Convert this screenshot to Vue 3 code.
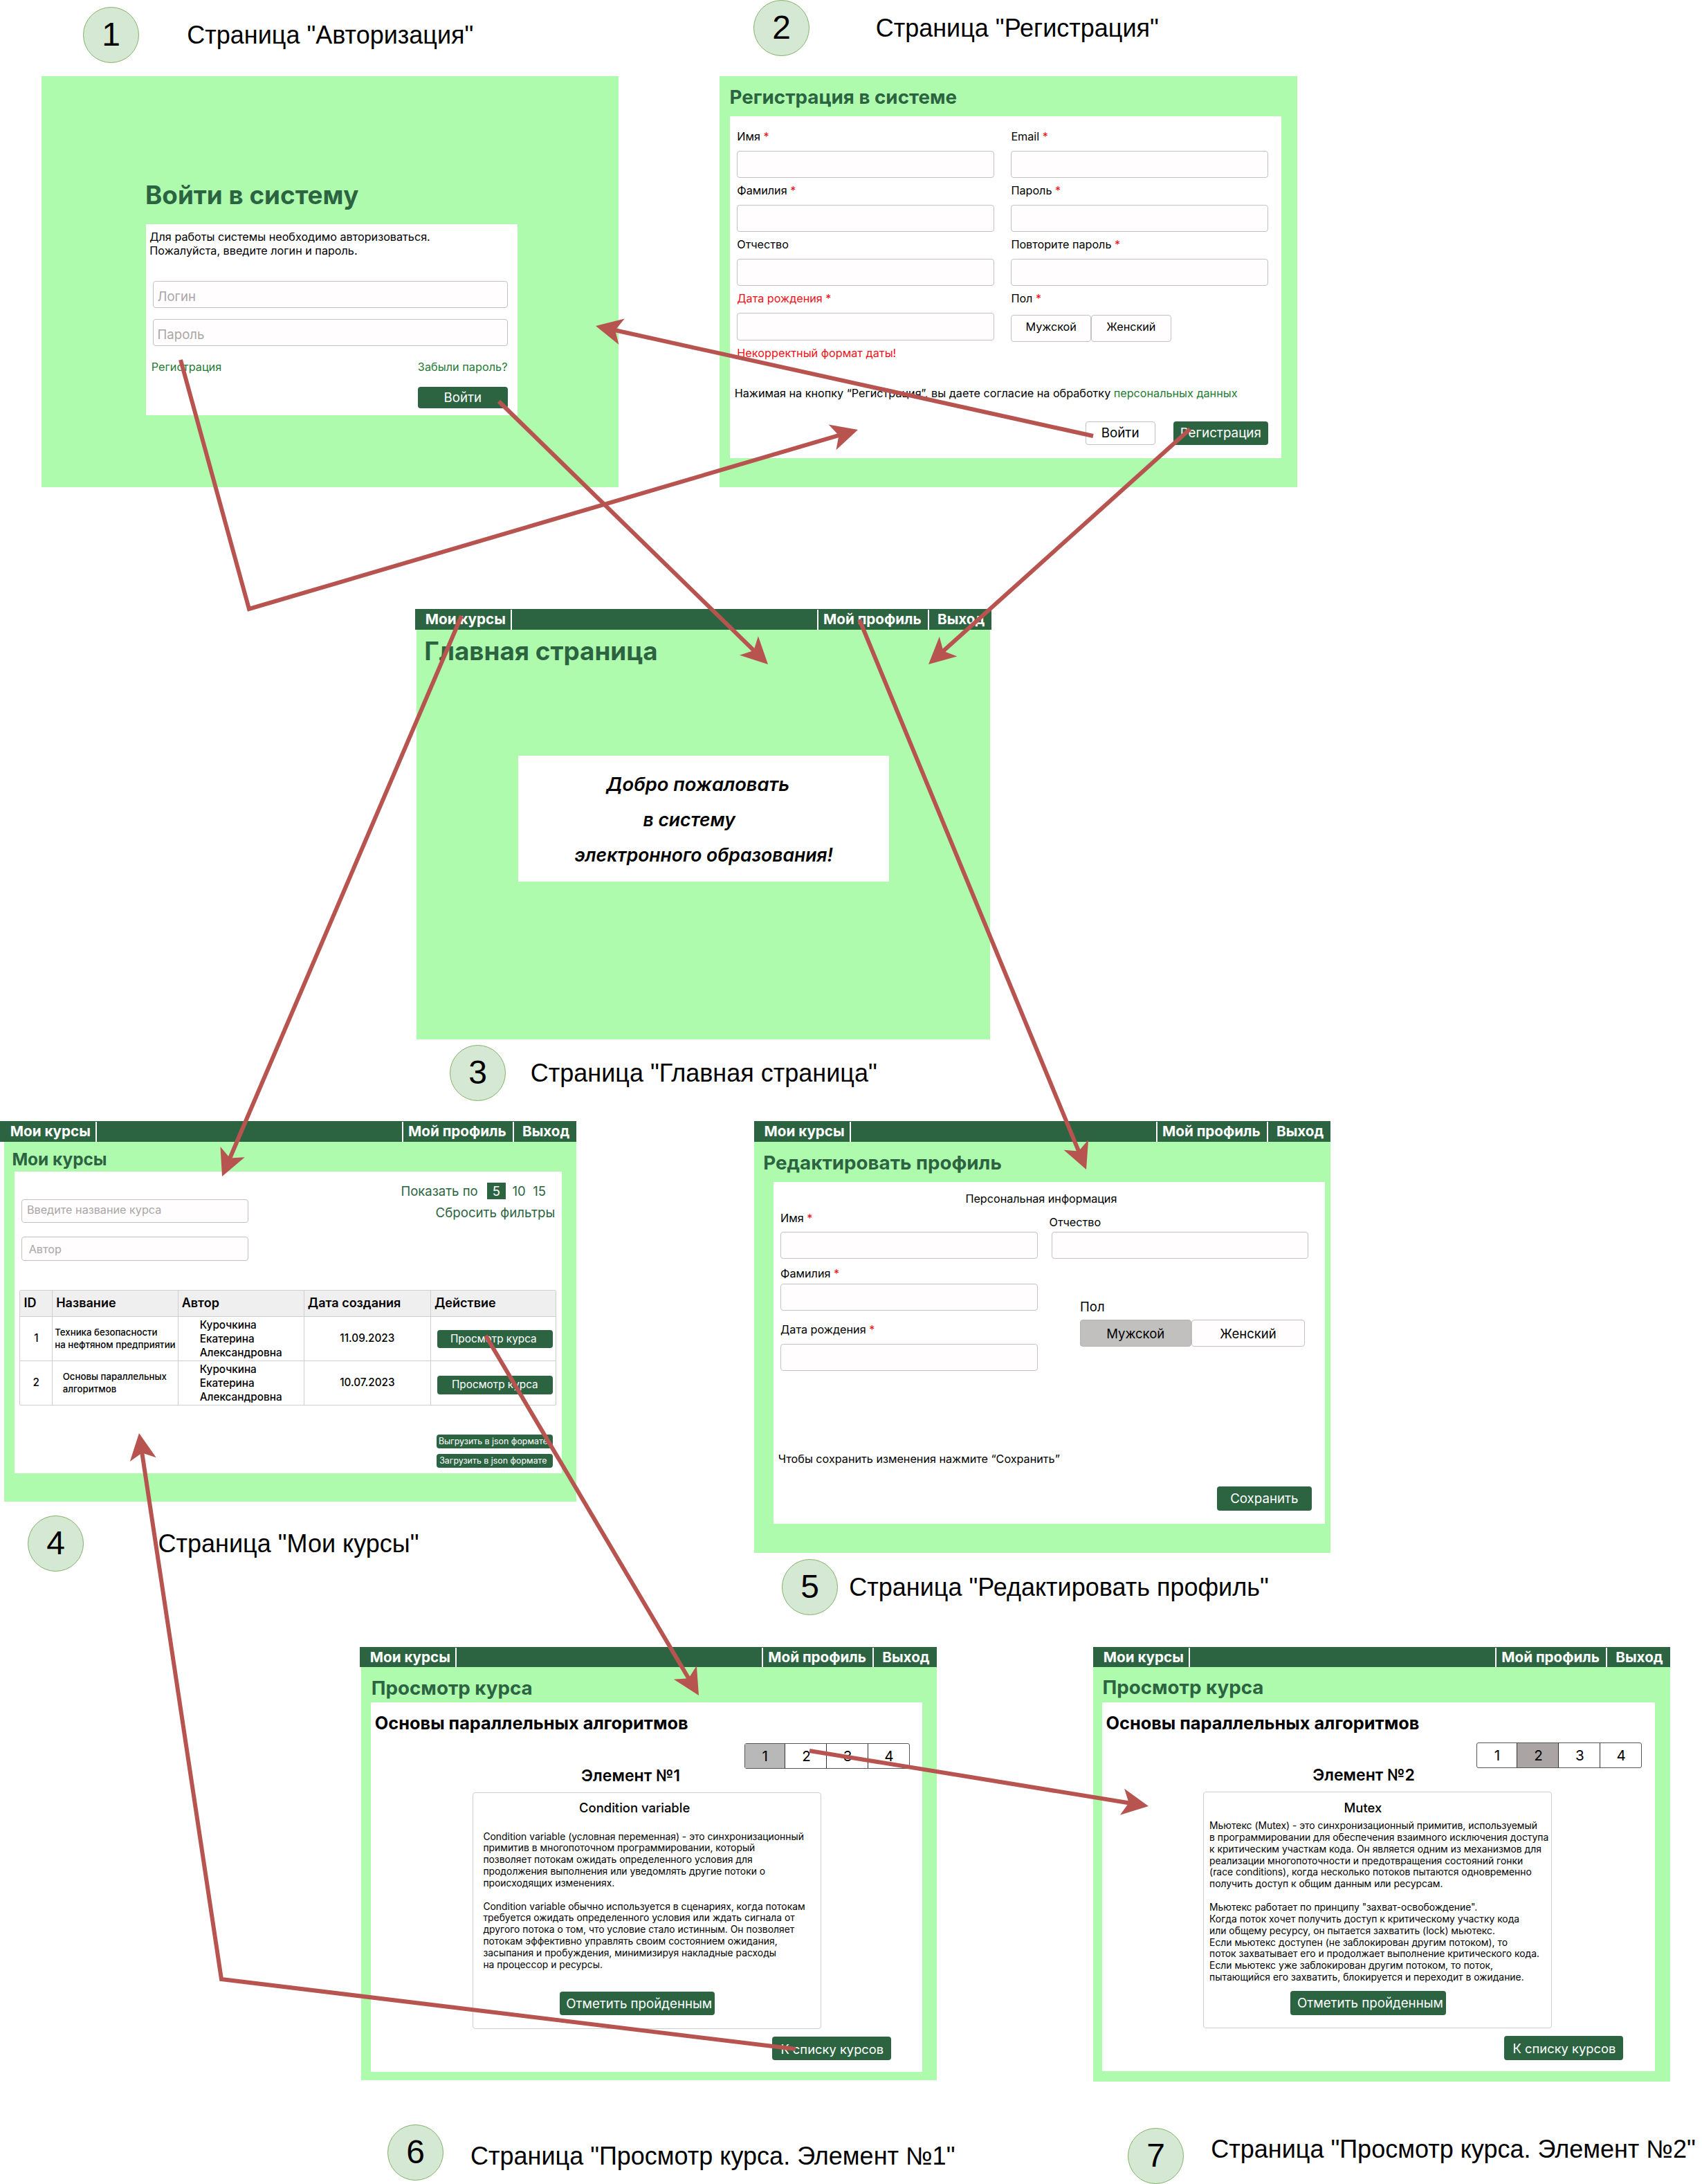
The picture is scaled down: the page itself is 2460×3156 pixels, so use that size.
<script setup>
import { h } from 'vue'

const NavBar = () =>
  h('nav', { class: 'nav' }, [
    h('a', { class: 'nav-courses' }, 'Мои курсы'),
    h('span', { class: 'nav-space' }),
    h('a', { class: 'nav-profile' }, 'Мой профиль'),
    h('a', { class: 'nav-exit' }, 'Выход'),
  ])

const captions = [
  { n: 1, cx: 120, cy: 10, x: 270.3, y: 30, text: 'Страница "Авторизация"' },
  { n: 2, cx: 1089, cy: 0, x: 1265.7, y: 20, text: 'Страница "Регистрация"' },
  { n: 3, cx: 650, cy: 1510, x: 766.8, y: 1530, text: 'Страница "Главная страница"' },
  { n: 4, cx: 40, cy: 2190, x: 228.6, y: 2210, text: 'Страница "Мои курсы"' },
  { n: 5, cx: 1130, cy: 2253, x: 1227.3, y: 2273, text: 'Страница "Редактировать профиль"' },
  { n: 6, cx: 560, cy: 3070, x: 680, y: 3095, text: 'Страница "Просмотр курса. Элемент №1"' },
  { n: 7, cx: 1630, cy: 3075, x: 1750.3, y: 3085, text: 'Страница "Просмотр курса. Элемент №2"' },
]

const arrows = [
  [[261, 520], [360, 880], [1240, 621]],
  [[721, 580], [1110, 960]],
  [[1580, 630], [861, 471]],
  [[1720, 620], [1342, 960]],
  [[667, 890], [321, 1700]],
  [[1242, 895], [1570, 1690]],
  [[702, 1930], [1010, 2450]],
  [[1150, 2961], [320, 2860], [201, 2071]],
  [[1170, 2530], [1660, 2610]],
].map((pts) => {
  const [x2, y2] = pts[pts.length - 1]
  const [x1, y1] = pts[pts.length - 2]
  const a = Math.atan2(y2 - y1, x2 - x1)
  const end = [x2 - Math.cos(a) * 28, y2 - Math.sin(a) * 28]
  return {
    line: [...pts.slice(0, -1), end].map((p) => p.join(',')).join(' '),
    head: `translate(${x2} ${y2}) rotate(${(a * 180) / Math.PI})`,
  }
})

const courses = [
  { id: 1, name: ['Техника безопасности', 'на нефтяном предприятии'], date: '11.09.2023' },
  { id: 2, name: ['Основы параллельных', 'алгоритмов'], date: '10.07.2023' },
]
const author = ['Курочкина', 'Екатерина', 'Александровна']

const lessons = [
  {
    n: 1,
    title: 'Condition variable',
    text: `Condition variable (условная переменная) - это синхронизационный
примитив в многопоточном программировании, который
позволяет потокам ожидать определенного условия для
продолжения выполнения или уведомлять другие потоки о
происходящих изменениях.

Condition variable обычно используется в сценариях, когда потокам
требуется ожидать определенного условия или ждать сигнала от
другого потока о том, что условие стало истинным. Он позволяет
потокам эффективно управлять своим состоянием ожидания,
засыпания и пробуждения, минимизируя накладные расходы
на процессор и ресурсы.`,
  },
  {
    n: 2,
    title: 'Mutex',
    text: `Мьютекс (Mutex) - это синхронизационный примитив, используемый
в программировании для обеспечения взаимного исключения доступа
к критическим участкам кода. Он является одним из механизмов для
реализации многопоточности и предотвращения состояний гонки
(race conditions), когда несколько потоков пытаются одновременно
получить доступ к общим данным или ресурсам.

Мьютекс работает по принципу "захват-освобождение".
Когда поток хочет получить доступ к критическому участку кода
или общему ресурсу, он пытается захватить (lock) мьютекс.
Если мьютекс доступен (не заблокирован другим потоком), то
поток захватывает его и продолжает выполнение критического кода.
Если мьютекс уже заблокирован другим потоком, то поток,
пытающийся его захватить, блокируется и переходит в ожидание.`,
  },
]
</script>

<template>
  <main class="board">
    <!-- 1. Авторизация -->
    <section class="screen login">
      <h1>Войти в систему</h1>
      <div class="card">
        <p class="hint">Для работы системы необходимо авторизоваться.<br />Пожалуйста, введите логин и пароль.</p>
        <div class="field">Логин</div>
        <div class="field">Пароль</div>
        <div class="links"><a>Регистрация</a><a>Забыли пароль?</a></div>
        <div class="btn">Войти</div>
      </div>
    </section>

    <!-- 2. Регистрация -->
    <section class="screen register">
      <h1>Регистрация в системе</h1>
      <div class="card">
        <div class="form">
          <div><label>Имя <i>*</i></label><div class="field"></div></div>
          <div><label>Email <i>*</i></label><div class="field"></div></div>
          <div><label>Фамилия <i>*</i></label><div class="field"></div></div>
          <div><label>Пароль <i>*</i></label><div class="field"></div></div>
          <div><label>Отчество</label><div class="field"></div></div>
          <div><label>Повторите пароль <i>*</i></label><div class="field"></div></div>
          <div><label class="bad">Дата рождения <i>*</i></label><div class="field"></div></div>
          <div>
            <label>Пол <i>*</i></label>
            <div class="toggle"><span>Мужской</span><span>Женский</span></div>
          </div>
        </div>
        <p class="error">Некорректный формат даты!</p>
        <p class="consent">Нажимая на кнопку “Регистрация”, вы даете согласие на обработку <a>персональных данных</a></p>
        <div class="actions">
          <div class="btn ghost">Войти</div>
          <div class="btn">Регистрация</div>
        </div>
      </div>
    </section>

    <!-- 3. Главная страница -->
    <section class="screen home">
      <NavBar />
      <div class="body">
        <h1>Главная страница</h1>
        <div class="card">
          <p>Добро пожаловать</p>
          <p>в систему</p>
          <p>электронного образования!</p>
        </div>
      </div>
    </section>

    <!-- 4. Мои курсы -->
    <section class="screen courses">
      <NavBar />
      <div class="body">
        <h1>Мои курсы</h1>
        <div class="card">
          <div class="top">
            <div class="filters">
              <div class="field">Введите название курса</div>
              <div class="field">Автор</div>
            </div>
            <div class="paging">
              <div class="sizes"><span>Показать по</span><b>5</b><span>10</span><span>15</span></div>
              <div class="reset">Сбросить фильтры</div>
            </div>
          </div>
          <div class="table">
            <div class="row head">
              <div>ID</div><div>Название</div><div>Автор</div><div>Дата создания</div><div>Действие</div>
            </div>
            <div v-for="c in courses" :key="c.id" class="row" :class="'r' + c.id">
              <div class="id">{{ c.id }}</div>
              <div class="name"><p v-for="l in c.name" :key="l">{{ l }}</p></div>
              <div class="author"><p v-for="l in author" :key="l">{{ l }}</p></div>
              <div class="date">{{ c.date }}</div>
              <div class="act"><div class="btn">Просмотр курса</div></div>
            </div>
          </div>
          <div class="exports">
            <div class="btn">Выгрузить в json формате</div>
            <div class="btn">Загрузить в json формате</div>
          </div>
        </div>
      </div>
    </section>

    <!-- 5. Редактировать профиль -->
    <section class="screen profile">
      <NavBar />
      <div class="body">
        <h1>Редактировать профиль</h1>
        <div class="card">
          <p class="subtitle">Персональная информация</p>
          <div class="cols">
            <div class="left">
              <label>Имя <i>*</i></label><div class="field"></div>
              <label>Фамилия <i>*</i></label><div class="field"></div>
              <label>Дата рождения <i>*</i></label><div class="field"></div>
            </div>
            <div class="right">
              <label>Отчество</label><div class="field"></div>
              <div class="sex">Пол</div>
              <div class="toggle"><span class="on">Мужской</span><span>Женский</span></div>
            </div>
          </div>
          <p class="note">Чтобы сохранить изменения нажмите “Сохранить”</p>
          <div class="btn">Сохранить</div>
        </div>
      </div>
    </section>

    <!-- 6, 7. Просмотр курса -->
    <section v-for="l in lessons" :key="l.n" class="screen lesson" :class="'l' + l.n">
      <NavBar />
      <div class="body">
        <h1>Просмотр курса</h1>
        <div class="card">
          <h2>Основы параллельных алгоритмов</h2>
          <div class="pager"><span v-for="p in 4" :key="p" :class="{ on: p === l.n }">{{ p }}</span></div>
          <h3>Элемент №{{ l.n }}</h3>
          <article>
            <h4>{{ l.title }}</h4>
            <p>{{ l.text }}</p>
            <div class="btn done">Отметить пройденным</div>
          </article>
          <div class="btn back">К списку курсов</div>
        </div>
      </div>
    </section>

    <template v-for="c in captions" :key="c.n">
      <div class="badge" :style="{ left: c.cx + 'px', top: c.cy + 'px' }">{{ c.n }}</div>
      <div class="caption" :style="{ left: c.x + 'px', top: c.y + 'px' }">{{ c.text }}</div>
    </template>

    <svg class="arrows" width="2460" height="3156" viewBox="0 0 2460 3156">
      <g v-for="(a, i) in arrows" :key="i">
        <polyline :points="a.line" fill="none" stroke="#b85450" stroke-width="6" />
        <path d="M0 0L-38.5 19.2L-28.8 0L-38.5 -19.2Z" :transform="a.head" fill="#b85450" />
      </g>
    </svg>
  </main>
</template>

<style>
body {
  margin: 0;
  background: #fff;
}
</style>

<style scoped>
.board {
  position: relative;
  width: 2460px;
  height: 3156px;
  overflow: hidden;
  background: #fff;
  color: #000;
  font-family: Inter, sans-serif;
  font-size: 16.18px;
  line-height: 20px;
  white-space: nowrap;
}
.board :deep(*) {
  box-sizing: border-box;
}
h1, h2, h3, h4, p {
  margin: 0;
}
i {
  font-style: normal;
  color: #f01018;
}
.screen {
  position: absolute;
  display: flex;
  flex-direction: column;
}
.body {
  flex: 1;
  background: #affbae;
}
h1 {
  font-size: 27.75px;
  line-height: 34px;
  font-weight: 700;
  color: #2c6442;
}
.card {
  display: flex;
  flex-direction: column;
  background: #fff;
}
.field {
  display: flex;
  align-items: center;
  height: 39px;
  border: 1px solid #c4c2c2;
  border-radius: 4px;
  background: #fffdfe;
  color: #aaa6a6;
}
.btn {
  display: flex;
  align-items: center;
  justify-content: center;
  flex: none;
  padding-top: 1px;
  border-radius: 4px;
  background: #2c6442;
  color: #fff;
  font-size: 18.7px;
}
label {
  display: block;
  height: 20px;
}
.toggle {
  display: flex;
}
.toggle span {
  display: flex;
  align-items: center;
  justify-content: center;
  border: 1px solid #c4c2c2;
  border-radius: 4px;
  background: #fffdfe;
}

/* navigation bar */
.screen :deep(.nav) {
  display: flex;
  align-items: stretch;
  flex: none;
  height: 29.5px;
  padding-top: 1px;
  background: #2c6442;
  color: #fff;
  font-size: 20.65px;
  font-weight: 700;
  line-height: 28px;
}
.screen :deep(.nav-courses) {
  width: 140px;
  padding-left: 14.8px;
  border-right: 2px solid #fff;
}
.screen :deep(.nav-space) {
  flex: 1;
}
.screen :deep(.nav-profile) {
  width: 160.5px;
  padding-left: 7.5px;
  border-left: 2px solid #fff;
}
.screen :deep(.nav-exit) {
  width: 92.3px;
  padding-left: 12px;
  border-left: 2px solid #fff;
}

/* login */
.login {
  left: 60px;
  top: 110px;
  width: 834.3px;
  height: 593.5px;
  padding: 149.6px 0 0 151px;
  background: #affbae;
}
.login h1 {
  margin-left: -1px;
  font-size: 36.8px;
  line-height: 44px;
}
.login .card {
  width: 536.5px;
  height: 276px;
  margin-top: 20.4px;
  padding: 9.3px 14px 0 10px;
}
.hint {
  margin: 0 0 34px -4.7px;
  line-height: 19.6px;
}
.login .field {
  margin-bottom: 16px;
  padding: 4.5px 0 0 5.5px;
  font-size: 18.6px;
}
.links {
  display: flex;
  justify-content: space-between;
  margin: 4px 0 18.4px -2.3px;
  color: #1f7a33;
  font-size: 16.3px;
}
.login .btn {
  align-self: flex-end;
  width: 129.5px;
  height: 31.5px;
}

/* registration */
.register {
  left: 1040px;
  top: 110px;
  width: 834.6px;
  height: 593.5px;
  padding: 12.6px 0 0 14.5px;
  background: #affbae;
}
.register .card {
  width: 797.2px;
  height: 494.1px;
  margin-top: 11px;
  padding: 19px 18.9px 0 10.8px;
}
.form {
  display: grid;
  grid-template-columns: 371.4px 371.4px;
  column-gap: 24.7px;
  row-gap: 8.2px;
}
.register .field {
  height: 39.1px;
  margin-top: 11px;
}
.register .toggle {
  height: 39.4px;
  margin-top: 13.6px;
  margin-bottom: -3px;
}
.register .toggle span {
  width: 115.6px;
  padding-bottom: 6px;
}
.bad, .error {
  color: #f01018;
}
.error {
  margin-top: 8.5px;
  font-size: 16.25px;
}
.consent {
  margin: 38px 0 30.9px -3.6px;
}
.consent a {
  color: #1f7a33;
}
.actions {
  display: flex;
  justify-content: flex-end;
  gap: 26.2px;
}
.actions .btn {
  width: 137px;
  height: 34px;
  font-size: 18.8px;
}
.actions .ghost {
  width: 101px;
  border: 1px solid #c4c2c2;
  background: #fff;
  color: #000;
}

/* home */
.home {
  left: 600px;
  top: 880px;
  width: 833.3px;
  height: 622.3px;
}
.home .body {
  margin: 0 2px;
  padding: 9.5px 0 0 10.3px;
}
.home h1 {
  margin-left: 1px;
  font-size: 36.8px;
  line-height: 44px;
}
.home .card {
  width: 536.5px;
  height: 182.4px;
  margin: 129px 0 0 136.7px;
  padding-top: 15.9px;
  font-size: 26.5px;
  font-style: italic;
  font-weight: 600;
  line-height: 51px;
  text-align: center;
}
.home .card p:nth-child(1) {
  padding-right: 17px;
  font-size: 27.3px;
}
.home .card p:nth-child(2) {
  padding-right: 42px;
}

/* course list */
.courses {
  left: 0;
  top: 1620px;
  width: 833.3px;
  height: 550px;
}
.courses .body {
  margin-left: 5.5px;
  padding: 10.6px 0 0 15.9px;
}
.courses h1 {
  margin-left: -4px;
  font-size: 24.4px;
  line-height: 30px;
}
.courses .card {
  width: 790.3px;
  height: 436.7px;
  margin-top: 2.7px;
  padding: 0 0 0 7.1px;
}
.top {
  display: flex;
  justify-content: space-between;
  padding: 0 9.4px 0 2.2px;
}
.filters {
  display: flex;
  flex-direction: column;
  gap: 19.9px;
  padding-top: 39.9px;
}
.courses .field {
  width: 328px;
  height: 34.7px;
  padding: 0 0 4px 7.3px;
}
.courses .field + .field {
  padding: 0 0 0 10px;
}
.paging {
  display: flex;
  flex-direction: column;
  align-items: flex-end;
  padding-top: 16.5px;
  color: #2c6442;
  font-size: 18.5px;
  line-height: 24px;
}
.sizes {
  display: flex;
  margin-right: 13.3px;
}
.sizes b {
  width: 26.4px;
  height: 23.4px;
  margin: 0 10px 0 13.5px;
  background: #2c6442;
  color: #fff;
  font-weight: 400;
  text-align: center;
}
.sizes span:last-child {
  margin-left: 10.5px;
}
.reset {
  margin-top: 8px;
  font-size: 18.7px;
}
.table {
  width: 776px;
  margin-top: 42.5px;
  border: 1px solid #cfcfcf;
  border-radius: 2px;
  font-size: 15.3px;
  font-weight: 500;
}
.row {
  display: grid;
  grid-template-columns: 45.7px 181.5px 182.1px 183.2px 1fr;
  height: 63.3px;
  border-top: 1px solid #cfcfcf;
}
.row > div {
  display: flex;
  flex-direction: column;
  justify-content: center;
}
.row > div + div {
  border-left: 1px solid #cfcfcf;
}
.row.head {
  height: 36.8px;
  border-top: 0;
  background: #efefef;
  font-size: 18.05px;
  font-weight: 600;
}
.row.head > div {
  padding: 0 0 2px 5px;
}
.r2 {
  height: 64.5px;
}
.row .id, .row .date {
  align-items: center;
}
.row .name {
  padding-left: 3px;
  font-size: 13.25px;
  line-height: 18px;
}
.r2 .name {
  padding-left: 14.5px;
}
.row .author {
  padding: 1px 0 0 31px;
}
.row .act {
  padding: 0.8px 0 0 8.8px;
}
.act .btn {
  width: 167.2px;
  height: 26.4px;
  padding: 0 4px 0 0;
  font-size: 15.35px;
  font-weight: 400;
}
.r2 .act .btn {
  margin-top: 5.6px;
  padding-right: 0;
}
.exports {
  display: flex;
  flex-direction: column;
  align-items: flex-end;
  gap: 8px;
  margin-top: 42.4px;
  padding-right: 12.9px;
}
.exports .btn {
  width: 167.5px;
  height: 20px;
  padding: 0 4.5px 0 0;
  font-size: 12.4px;
}

/* profile */
.profile {
  left: 1089.8px;
  top: 1620px;
  width: 833.5px;
  height: 624px;
}
.profile .body {
  padding: 13.1px 0 0 28px;
}
.profile h1 {
  margin-left: -14.5px;
}
.profile .card {
  width: 796.9px;
  height: 494.1px;
  margin-top: 11px;
  padding: 14.3px 19px 0 10.3px;
}
.subtitle {
  padding-right: 14px;
  text-align: center;
}
.cols {
  display: flex;
  gap: 20.2px;
  height: 239.1px;
}
.left, .right {
  width: 371.5px;
}
.left label:nth-of-type(1) {
  margin: 8.2px 0 10.2px;
}
.left label:nth-of-type(2) {
  margin: 10.6px 0 5.2px;
}
.left label:nth-of-type(3) {
  margin: 17.1px 0 10.4px;
}
.right label {
  margin: 14.2px 0 4.2px -3.2px;
}
.sex {
  margin: 56.7px 0 6.8px 41.3px;
  font-size: 18.5px;
  line-height: 24px;
}
.profile .toggle {
  height: 39.4px;
  margin-left: 40.9px;
  font-size: 18.5px;
}
.profile .toggle span {
  width: 164.4px;
  padding-top: 2px;
}
.profile .toggle .on {
  width: 161.1px;
  border-color: #b5b4b2;
  background: #c1c0be;
}
.note {
  margin: 117.5px 0 29.9px -3.3px;
}
.profile .card > .btn {
  align-self: flex-end;
  width: 136.7px;
  height: 34.5px;
}

/* lesson */
.lesson {
  top: 2379.8px;
  width: 833.6px;
}
.l1 {
  left: 520px;
  height: 626.5px;
}
.l2 {
  left: 1580px;
  height: 628px;
}
.lesson .body {
  padding: 12.5px 0 0 14.2px;
}
.l1 .body {
  margin-left: 1.8px;
}
.l2 .body {
  padding: 12px 0 0 12.7px;
}
.lesson h1 {
  margin-left: 0.8px;
}
.lesson .card {
  width: 797px;
  height: 533.6px;
  margin-top: 4.3px;
  padding: 15.4px 18.4px 0 0;
}
.l2 .card {
  width: 799.6px;
  padding-right: 19.5px;
}
h2 {
  margin-left: 5.8px;
  font-size: 25.35px;
  line-height: 30px;
  font-weight: 700;
}
.pager {
  display: flex;
  align-self: flex-end;
  width: 238.6px;
  height: 37px;
  margin-top: 13.3px;
  border: 1px solid #555;
  border-radius: 3px;
  font-size: 20.6px;
  line-height: 36px;
}
.pager span {
  flex: 1;
  text-align: center;
}
.pager span + span {
  padding-left: 1.5px;
  border-left: 1px solid #333;
}
.pager .on {
  background: #b8b8b8;
}
.l2 .pager .on {
  background: #aaa4a4;
}
h3 {
  margin: -4.2px 0 10.2px;
  padding-right: 27.4px;
  font-size: 23.1px;
  line-height: 28px;
  font-weight: 600;
  text-align: center;
}
.l2 h3 {
  padding-right: 23.5px;
}
article {
  display: flex;
  flex-direction: column;
  width: 504.2px;
  height: 342px;
  margin-left: 146.6px;
  padding: 9.5px 0 18.5px;
  border: 1px solid #cfcdcd;
  border-radius: 4px;
}
h4 {
  padding-right: 35px;
  font-size: 18.45px;
  line-height: 24px;
  font-weight: 500;
  text-align: center;
}
.l2 h4 {
  padding-right: 43px;
}
article p {
  margin: 21.3px 0 0 14.8px;
  font-size: 13.88px;
  line-height: 16.84px;
  white-space: pre;
}
.l2 article p {
  margin: 6.3px 0 0 7.8px;
}
.done {
  width: 224.3px;
  height: 34.5px;
  margin: auto 0 0 125px;
  padding-left: 6px;
}
.back {
  align-self: flex-end;
  width: 171.6px;
  height: 34.5px;
  margin: 11.2px 27px 0 0;
  padding-left: 2px;
  font-size: 18.35px;
}

/* captions and links between the screens */
.badge {
  position: absolute;
  width: 81px;
  height: 81px;
  border: 1px solid #82b366;
  border-radius: 50%;
  background: #d5e8d4;
  font: 48px/78px "Liberation Sans", Arial, sans-serif;
  text-align: center;
}
.caption {
  position: absolute;
  font: 36px/42px "Liberation Sans", Arial, sans-serif;
}
.arrows {
  position: absolute;
  left: 0;
  top: 0;
}
</style>
